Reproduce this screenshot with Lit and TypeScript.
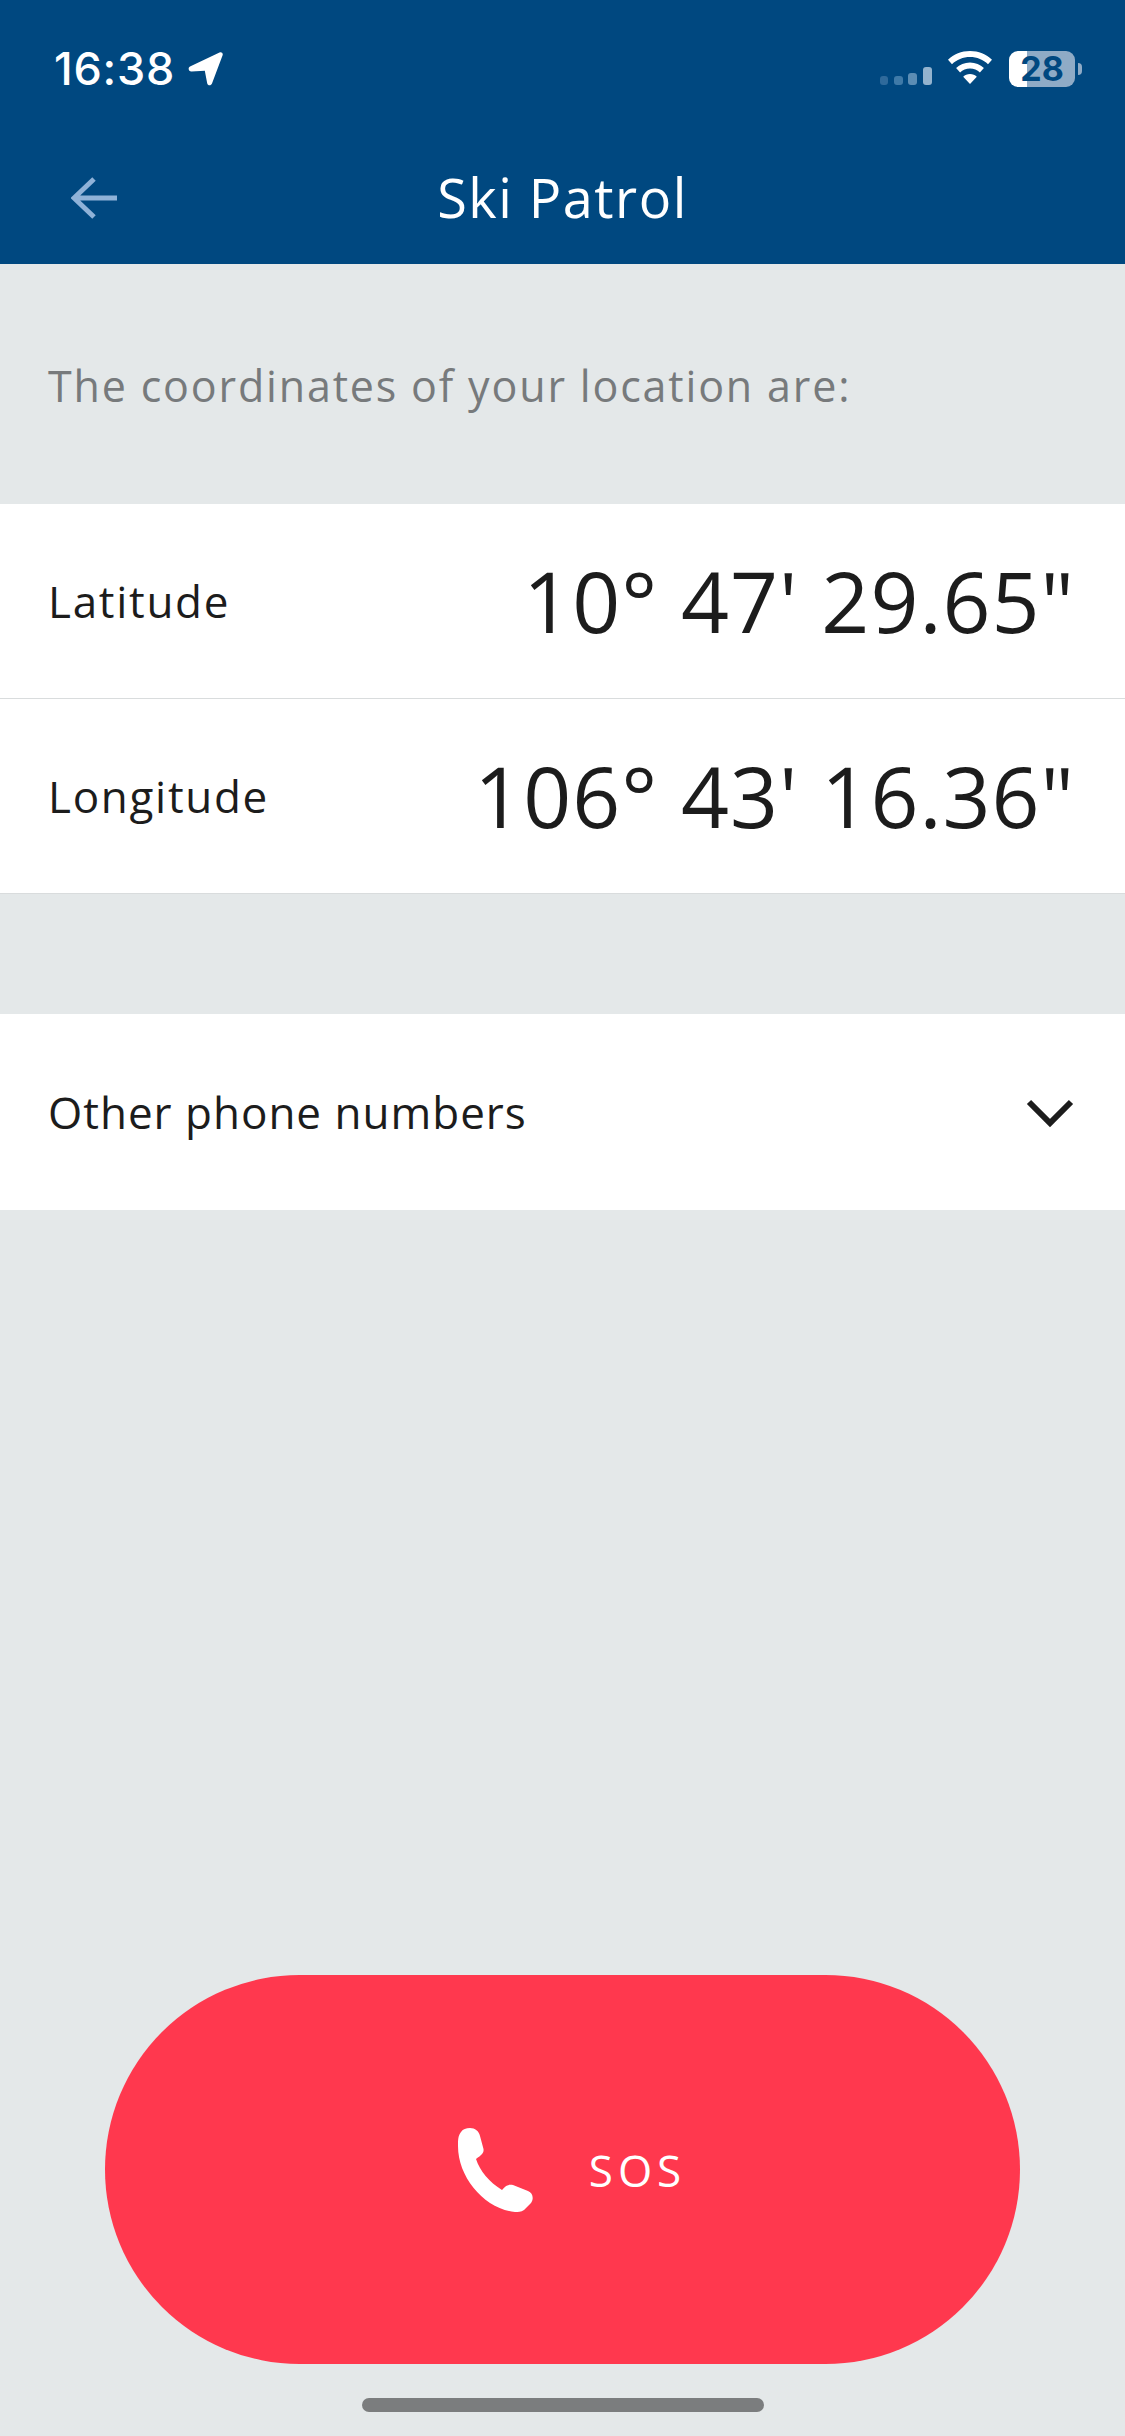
import { LitElement, html, css } from 'lit';
import { customElement } from 'lit/decorators.js';

@customElement('app-root')
export class AppRoot extends LitElement {
  static styles = css`
    :host {
      display: flex;
      flex-direction: column;
      width: 1125px;
      height: 2436px;
      background: #e4e8e9;
      font-family: 'Open Sans', 'Noto Sans', sans-serif;
      color: #1c1c1c;
      overflow: hidden;
    }

    .header {
      height: 264px;
      box-sizing: border-box;
      background: #004880;
      color: #fff;
      flex: none;
    }

    .status {
      height: 135px;
      box-sizing: border-box;
      padding: 45px 50px 0 54px;
      display: flex;
      justify-content: space-between;
      align-items: flex-start;
    }

    .time {
      display: flex;
      align-items: center;
      gap: 13px;
      font: 500 45px/48px Inter, sans-serif;
      letter-spacing: 0.8px;
    }

    .indicators {
      display: flex;
      align-items: flex-end;
      gap: 15px;
      margin-top: 6px;
    }

    .signal {
      margin-bottom: 2px;
    }

    .wifi {
      margin-bottom: 2px;
      margin-right: 1px;
    }

    .battery {
      position: relative;
      width: 66px;
      height: 36px;
      border-radius: 9px;
      background: linear-gradient(90deg, #fff 18px, #8fabc6 18px);
      color: #004880;
      font: 700 34px/36px Inter, sans-serif;
      text-align: center;
    }

    .battery::after {
      content: '';
      position: absolute;
      right: -7px;
      top: 12px;
      width: 4px;
      height: 12px;
      border-radius: 0 4px 4px 0;
      background: #8fabc6;
    }

    .nav {
      height: 124px;
      display: grid;
      grid-template-columns: 1fr auto 1fr;
      align-items: center;
    }

    .back {
      margin: 2px 0 0 71px;
    }

    .title {
      font-size: 54px;
      line-height: 64px;
      letter-spacing: 1.5px;
    }

    .intro {
      height: 240px;
      box-sizing: border-box;
      padding: 96px 48px 0;
      font-size: 43px;
      line-height: 52px;
      letter-spacing: 1.83px;
      color: #777a7c;
      flex: none;
    }

    .card {
      background: #fff;
      flex: none;
    }

    .row {
      height: 195px;
      box-sizing: border-box;
      display: flex;
      align-items: center;
      justify-content: space-between;
      padding: 0 50px 0 48px;
      border-bottom: 1px solid #d9dcdd;
    }

    .label {
      font-size: 44px;
      letter-spacing: 1.7px;
    }

    .value {
      font-size: 84px;
      line-height: 100px;
      letter-spacing: 1px;
    }

    .other {
      margin-top: 120px;
    }

    .other .row {
      height: 196px;
      padding-right: 51px;
      border-bottom: 0;
    }

    .other .label {
      letter-spacing: 1px;
    }

    .spacer {
      flex: 1;
    }

    .sos {
      align-self: center;
      width: 915px;
      height: 389px;
      box-sizing: border-box;
      padding-left: 19px;
      border-radius: 195px;
      background: #ff384e;
      color: #fff;
      display: flex;
      align-items: center;
      justify-content: center;
      gap: 55px;
      flex: none;
    }

    .sos span {
      font-size: 44px;
      letter-spacing: 5px;
    }

    .home {
      align-self: center;
      width: 402px;
      height: 14px;
      border-radius: 7px;
      background: #7b7d7e;
      margin: 34px 0 24px;
      flex: none;
    }
  `;

  render() {
    return html`
      <div class="header">
        <div class="status">
          <div class="time">
            16:38
            <svg width="36" height="36" viewBox="0 0 36 36">
              <path
                d="M2 15.500 31.500 1.500C33.500.7 35.300 2.300 34.600 4.300L24 32.500C23 35 19.700 34.800 19.200 32.200L16.800 19.800 3.500 20.500C.6 20.600-.4 16.800 2 15.500Z"
                fill="#fff"
              />
            </svg>
          </div>
          <div class="indicators">
            <svg class="signal" width="52" height="18" viewBox="0 0 52 18">
              <rect x="0" y="9" width="8" height="9" rx="3" fill="#2f6a9b" />
              <rect x="14" y="9" width="9" height="9" rx="3" fill="#3f7aa8" />
              <rect x="28" y="6" width="9" height="12" rx="3" fill="#5c8db4" />
              <rect x="43" y="0" width="9" height="18" rx="3" fill="#93b3ce" />
            </svg>
            <svg class="wifi" width="46" height="34" viewBox="0 0 46 34">
              <path
                d="M23 0C14.500 0 6.700 3.300 1 8.800L5 13.200C9.700 8.700 16 6 23 6S36.300 8.700 41 13.200L45 8.800C39.300 3.300 31.500 0 23 0Z"
                fill="#fff"
              />
              <path
                d="M23 11.500C17.600 11.500 12.700 13.600 9.100 17.100L13.100 21.400C15.700 18.900 19.200 17.400 23 17.400S30.300 18.900 32.900 21.400L36.900 17.100C33.300 13.600 28.400 11.500 23 11.500Z"
                fill="#fff"
              />
              <path d="M23 23C20.300 23 17.900 24 16.200 25.700L23 33 29.800 25.700C28.100 24 25.700 23 23 23Z" fill="#fff" />
            </svg>
            <div class="battery">28</div>
          </div>
        </div>
        <div class="nav">
          <svg class="back" width="46" height="42" viewBox="0 0 46 42">
            <path d="M23 2 3 21 23 40M3 21H46" fill="none" stroke="#8fb2d8" stroke-width="5" />
          </svg>
          <div class="title">Ski Patrol</div>
        </div>
      </div>

      <div class="intro">The coordinates of your location are:</div>

      <div class="card">
        <div class="row">
          <div class="label">Latitude</div>
          <div class="value">10° 47' 29.65"</div>
        </div>
        <div class="row">
          <div class="label">Longitude</div>
          <div class="value">106° 43' 16.36"</div>
        </div>
      </div>

      <div class="card other">
        <div class="row">
          <div class="label">Other phone numbers</div>
          <svg width="48" height="34" viewBox="0 0 48 34">
            <path d="M3 7 24 28 45 7" fill="none" stroke="#1c1c1c" stroke-width="6" />
          </svg>
        </div>
      </div>

      <div class="spacer"></div>

      <div class="sos">
        <svg width="76" height="84" viewBox="0 0 76 84">
          <path
            d="M12 0C17 0 21 3 22 8L25.500 21C26 25 24 27 18 31 22 43 31 54 44 62 48 57 51 56 55 57L70 63C75 65 76 71 73 75L66 82C63 84 60 84 57 84 27 81 0 50 0 18 0 12 0 8 3 4 5 1 8 0 12 0Z"
            fill="#fff"
          />
        </svg>
        <span>SOS</span>
      </div>

      <div class="home"></div>
    `;
  }
}
